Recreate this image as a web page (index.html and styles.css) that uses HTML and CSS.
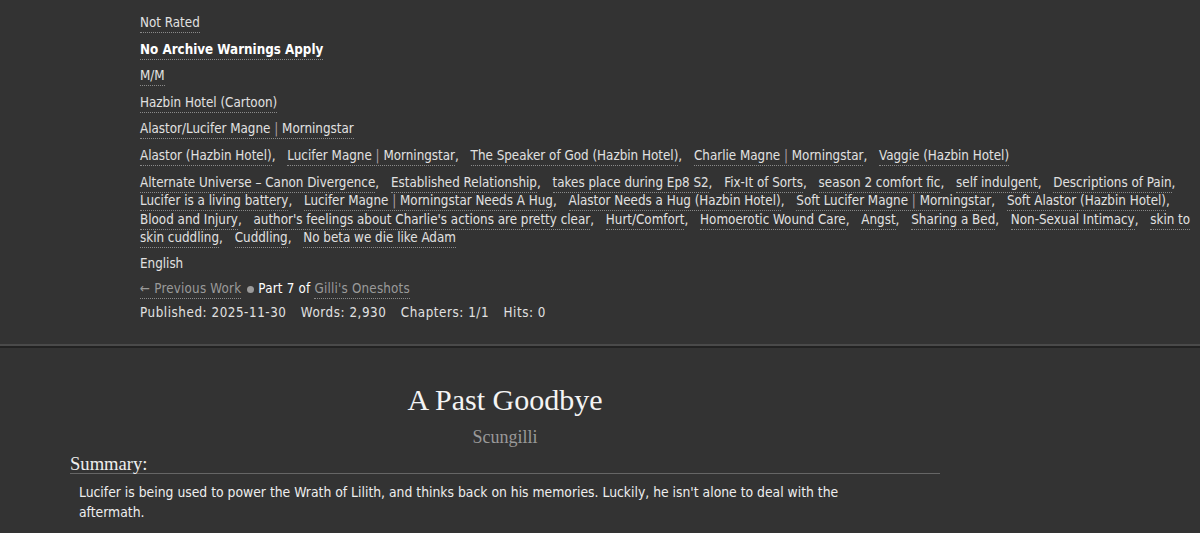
FILE: index.html
```html
<!DOCTYPE html>
<html lang="en">
<head>
    <meta charset="UTF-8">
    <meta name="viewport" content="width=device-width, initial-scale=1.0">
    <title>A Past Goodbye - Scungilli</title>
    <link rel="stylesheet" href="styles.css">
</head>
<body>

<div class="work-meta">
    <div class="meta-row">
        <ul class="tags"><li><a class="tag" href="#">Not Rated</a></li></ul>
    </div>
    <div class="meta-row">
        <ul class="tags"><li><a class="tag warning" href="#">No Archive Warnings Apply</a></li></ul>
    </div>
    <div class="meta-row">
        <ul class="tags"><li><a class="tag" href="#">M/M</a></li></ul>
    </div>
    <div class="meta-row">
        <ul class="tags"><li><a class="tag" href="#">Hazbin Hotel (Cartoon)</a></li></ul>
    </div>
    <div class="meta-row">
        <ul class="tags"><li><a class="tag" href="#">Alastor/Lucifer Magne <span class="pipe">|</span> Morningstar</a></li></ul>
    </div>
    <div class="meta-row">
        <ul class="tags commas">
            <li><a class="tag" href="#">Alastor (Hazbin Hotel)</a></li>
            <li><a class="tag" href="#">Lucifer Magne <span class="pipe">|</span> Morningstar</a></li>
            <li><a class="tag" href="#">The Speaker of God (Hazbin Hotel)</a></li>
            <li><a class="tag" href="#">Charlie Magne <span class="pipe">|</span> Morningstar</a></li>
            <li><a class="tag" href="#">Vaggie (Hazbin Hotel)</a></li>
        </ul>
    </div>
    <div class="meta-row freeform">
        <ul class="tags commas">
            <li><a class="tag" href="#">Alternate Universe – Canon Divergence</a></li>
            <li><a class="tag" href="#">Established Relationship</a></li>
            <li><a class="tag" href="#">takes place during Ep8 S2</a></li>
            <li><a class="tag" href="#">Fix-It of Sorts</a></li>
            <li><a class="tag" href="#">season 2 comfort fic</a></li>
            <li><a class="tag" href="#">self indulgent</a></li>
            <li><a class="tag" href="#">Descriptions of Pain</a></li>
            <li><a class="tag" href="#">Lucifer is a living battery</a></li>
            <li><a class="tag" href="#">Lucifer Magne <span class="pipe">|</span> Morningstar Needs A Hug</a></li>
            <li><a class="tag" href="#">Alastor Needs a Hug (Hazbin Hotel)</a></li>
            <li><a class="tag" href="#">Soft Lucifer Magne <span class="pipe">|</span> Morningstar</a></li>
            <li><a class="tag" href="#">Soft Alastor (Hazbin Hotel)</a></li>
            <li><a class="tag" href="#">Blood and Injury</a></li>
            <li><a class="tag" href="#">author's feelings about Charlie's actions are pretty clear</a></li>
            <li><a class="tag" href="#">Hurt/Comfort</a></li>
            <li><a class="tag" href="#">Homoerotic Wound Care</a></li>
            <li><a class="tag" href="#">Angst</a></li>
            <li><a class="tag" href="#">Sharing a Bed</a></li>
            <li><a class="tag" href="#">Non-Sexual Intimacy</a></li>
            <li><a class="tag" href="#">skin to skin cuddling</a></li>
            <li><a class="tag" href="#">Cuddling</a></li>
            <li><a class="tag" href="#">No beta we die like Adam</a></li>
        </ul>
    </div>
    <div class="meta-row language">English</div>
    <div class="meta-row series">
        <a class="series-link" href="#">← Previous Work</a>
        <span class="dot"></span>
        <span class="position">Part 7 of</span>
        <a class="series-link" href="#">Gilli's Oneshots</a>
    </div>
    <dl class="meta-row stats">
        <dt>Published:</dt> <dd>2025-11-30</dd>
        <dt>Words:</dt> <dd>2,930</dd>
        <dt>Chapters:</dt> <dd>1/1</dd>
        <dt>Hits:</dt> <dd>0</dd>
    </dl>
</div>

<div class="divider"></div>

<div class="preface">
    <h2 class="title">A Past Goodbye</h2>
    <h3 class="byline"><a href="#">Scungilli</a></h3>
    <div class="summary">
        <h3 class="heading">Summary:</h3>
        <blockquote class="userstuff">
            <p>Lucifer is being used to power the Wrath of Lilith, and thinks back on his memories. Luckily, he isn't alone to deal with the aftermath.</p>
        </blockquote>
    </div>
</div>

</body>
</html>
```

FILE: styles.css
```css
body {
    margin: 0;
    background: #333;
    color: #e1e1e1;
    font-family: "DejaVu Sans Condensed", "DejaVu Sans", sans-serif;
    font-size: 13.3px;
    line-height: 18.33px;
}

a {
    color: inherit;
    text-decoration: none;
}

/* tag block above the work */
.work-meta {
    padding: 14px 2px 22px 140px;
}

.meta-row {
    margin: 0 0 8.2px;
}

.freeform {
    margin-top: 9px;
    margin-bottom: 7.5px;
}

.language {
    margin-bottom: 6.7px;
}

.series {
    margin-bottom: 5.7px;
    letter-spacing: 0.2px;
}

.tags {
    list-style: none;
    margin: 0;
    padding: 0;
}

.tags li {
    display: inline;
}

.commas li {
    margin-right: 8px;
}

.commas li::after {
    content: ",";
}

.commas li:last-child::after {
    content: none;
}

.tag {
    padding-bottom: 2px;
    border-bottom: 1px dotted #8a8a8a;
}

.warning {
    font-weight: bold;
    color: #fff;
}

.pipe {
    color: #a99ca2;
}

.series-link {
    color: #9a9a9a;
    padding-bottom: 2px;
    border-bottom: 1px dotted #8a8a8a;
}

.dot {
    display: inline-block;
    width: 7px;
    height: 7px;
    margin-left: 2px;
    border-radius: 50%;
    background: #9a9a9a;
}

.position {
    color: #fff;
}

.stats {
    margin-bottom: 0;
    letter-spacing: 0.55px;
}

.stats dt,
.stats dd {
    display: inline;
    margin: 0;
}

.stats dd {
    margin-right: 10px;
}

.divider {
    border-top: 2px solid #4a4a4a;
    border-bottom: 2px solid #222;
}

/* title, author and summary */
.preface {
    width: 870px;
    margin-left: 70px;
}

.title {
    margin: 34px 0 0;
    font-family: "Liberation Serif", serif;
    font-size: 30px;
    line-height: 36px;
    font-weight: normal;
    text-align: center;
    color: #f4f4f4;
}

.byline {
    margin: 8px 0 0;
    font-family: "Liberation Serif", serif;
    font-size: 18px;
    line-height: 22px;
    font-weight: normal;
    text-align: center;
    color: #999;
}

.summary .heading {
    margin: 5.5px 0 0;
    font-family: "Liberation Serif", serif;
    font-size: 18.6px;
    line-height: 19.5px;
    font-weight: normal;
    color: #eee;
    border-bottom: 1px solid #666;
}

.userstuff {
    margin: 7.5px 70px 0 9px;
    font-size: 13.8px;
    line-height: 20px;
    color: #eee;
}

.userstuff p {
    margin: 0;
}
```
